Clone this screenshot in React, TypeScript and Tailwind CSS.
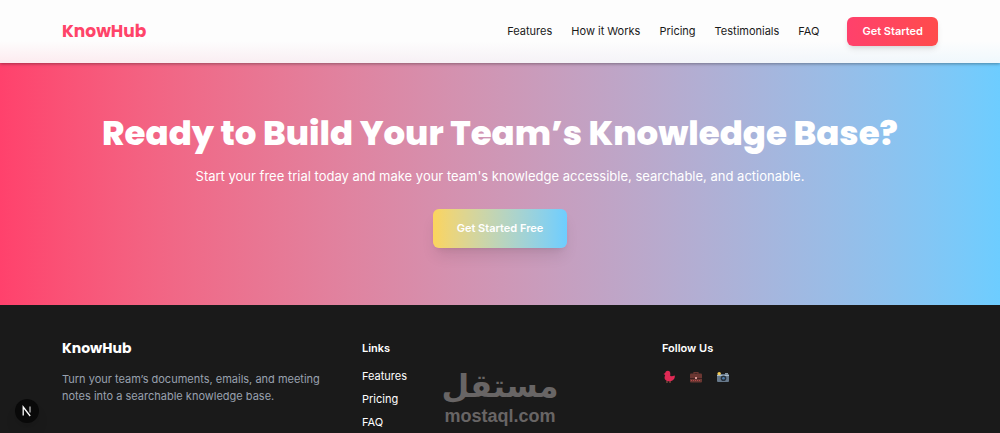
import React from "react";

const navLinks = ["Features", "How it Works", "Pricing", "Testimonials", "FAQ"];
const footerLinks = ["Features", "Pricing", "FAQ"];

function BirdIcon() {
  return (
    <svg viewBox="0 0 14 14" className="h-3.5 w-3.5" aria-hidden="true">
      <path d="M5 10.5v2.500M8 10.5v2.500" stroke="#7a4a3c" strokeWidth="1.4" />
      <path d="M1.500 4 3.200 3C3.500 1.600 4.600.8 5.800.8c1.600 0 2.600 1.200 2.500 2.800L8.200 6l1.800.2L12.800 5.400c.4 3.200-1.800 5.800-5.400 5.800C4.200 11.200 2.200 9.600 2.600 7L3.200 5z" fill="#df2a55" />
    </svg>
  );
}

function BriefcaseIcon() {
  return (
    <svg viewBox="0 0 14 14" className="h-3.5 w-3.5" aria-hidden="true">
      <path d="M5 4V2.500h4V4" fill="none" stroke="#6b3732" strokeWidth="1.200" />
      <rect x="1" y="3.500" width="12" height="9" rx="1" fill="#6b3732" />
      <path d="M1 8.500h12" stroke="#3d2020" />
      <path d="M2 10.500h10" stroke="#b5484a" strokeDasharray="1 1" />
      <rect x="6" y="7" width="2" height="2" fill="#d99a98" />
    </svg>
  );
}

function CameraIcon() {
  return (
    <svg viewBox="0 0 14 14" className="h-3.5 w-3.5" aria-hidden="true">
      <rect x="1" y="4" width="12" height="8" rx="1" fill="#66788a" />
      <path d="M1 5.500h12" stroke="#a9bccb" />
      <rect x="9" y="3" width="3" height="1.500" fill="#8797a5" />
      <circle cx="7.500" cy="8.200" r="2.800" fill="#26303b" />
      <circle cx="7.500" cy="8.200" r="1.300" fill="#4c7bab" />
      <circle cx="3.200" cy="3.600" r="1.700" fill="#f5cd55" />
    </svg>
  );
}

const socials = [
  { label: "Twitter", icon: <BirdIcon /> },
  { label: "LinkedIn", icon: <BriefcaseIcon /> },
  { label: "Instagram", icon: <CameraIcon /> },
];

export default function App() {
  return (
    <div className="relative flex min-h-screen flex-col overflow-hidden bg-[#1a1a1a] font-['Inter',sans-serif]">
      <header className="relative z-10 bg-[linear-gradient(to_bottom,#fdfdfd_65%,rgba(253,253,253,0.9)),linear-gradient(to_right,#ff416c,#6dcdff)] shadow-[0_1px_3px_rgba(0,0,0,0.35)]">
        <div className="mx-auto flex h-[63px] max-w-[876px] items-center">
          <a href="#" className="font-['Poppins','Inter',sans-serif] text-[17px] font-bold text-[#ff4469]">KnowHub</a>
          <nav className="ml-auto flex items-center gap-[19px] text-[11px] text-[#1a1a1a]">
            {navLinks.map((l) => <a key={l} href="#">{l}</a>)}
          </nav>
          <button className="ml-7 h-[29px] rounded-md bg-linear-to-r from-[#ff416c] to-[#ff4b4b] px-[15px] text-[11px] font-semibold text-white shadow-md">
            Get Started
          </button>
        </div>
      </header>

      <main className="flex flex-col items-center bg-linear-to-r from-[#ff416c] to-[#6dcdff] pt-[46px] pb-[57px] text-center text-white">
        <h1 className="font-['Poppins','Inter',sans-serif] text-[34px] leading-12 font-extrabold">
          Ready to Build Your Team’s Knowledge Base?
        </h1>
        <p className="mt-[9px] text-[13px] leading-5">
          Start your free trial today and make your team's knowledge accessible, searchable, and actionable.
        </p>
        <button className="mt-[23px] h-[39px] rounded-md bg-linear-to-r from-[#fbd45c] to-[#6dcdff] px-6 text-[11px] font-semibold shadow-lg">
          Get Started Free
        </button>
      </main>

      <footer className="flex-1 text-white">
        <div className="mx-auto grid max-w-[876px] grid-cols-3 gap-6 pt-[31px]">
          <section>
            <h2 className="font-['Poppins','Inter',sans-serif] text-sm leading-6 font-bold">KnowHub</h2>
            <p className="mt-[11px] text-[11px] leading-[17px] text-[#99a1af]">
              Turn your team’s documents, emails, and meeting notes into a searchable knowledge base.
            </p>
          </section>
          <section>
            <h3 className="text-[11px] leading-6 font-semibold">Links</h3>
            <ul className="mt-[5px] text-[11px] leading-[23px]">
              {footerLinks.map((l) => <li key={l}><a href="#">{l}</a></li>)}
            </ul>
          </section>
          <section>
            <h3 className="text-[11px] leading-6 font-semibold">Follow Us</h3>
            <div className="mt-2.5 flex gap-[13px]">
              {socials.map((s) => <a key={s.label} href="#" aria-label={s.label}>{s.icon}</a>)}
            </div>
          </section>
        </div>
      </footer>

      <div className="absolute bottom-2 left-1/2 flex -translate-x-1/2 flex-col items-center text-[#686565]">
        <span lang="ar" dir="rtl" className="font-['DejaVu_Sans',sans-serif] text-[32px] leading-10 font-bold">مستقل</span>
        <span className="font-['Liberation_Sans',sans-serif] text-lg leading-5 font-bold">mostaql.com</span>
      </div>

      <button aria-label="Next.js" className="absolute bottom-[11px] left-[15px] grid h-6 w-6 place-items-center rounded-full bg-[#090909] shadow-lg">
        <svg viewBox="0 0 12 12" className="h-3 w-3" fill="none" stroke="#fff" strokeWidth="1.300" aria-hidden="true">
          <path d="M2.200 10.500V2L9.200 11" />
          <path d="M9 1.500V7.500" stroke="#bbb" />
        </svg>
      </button>
    </div>
  );
}
